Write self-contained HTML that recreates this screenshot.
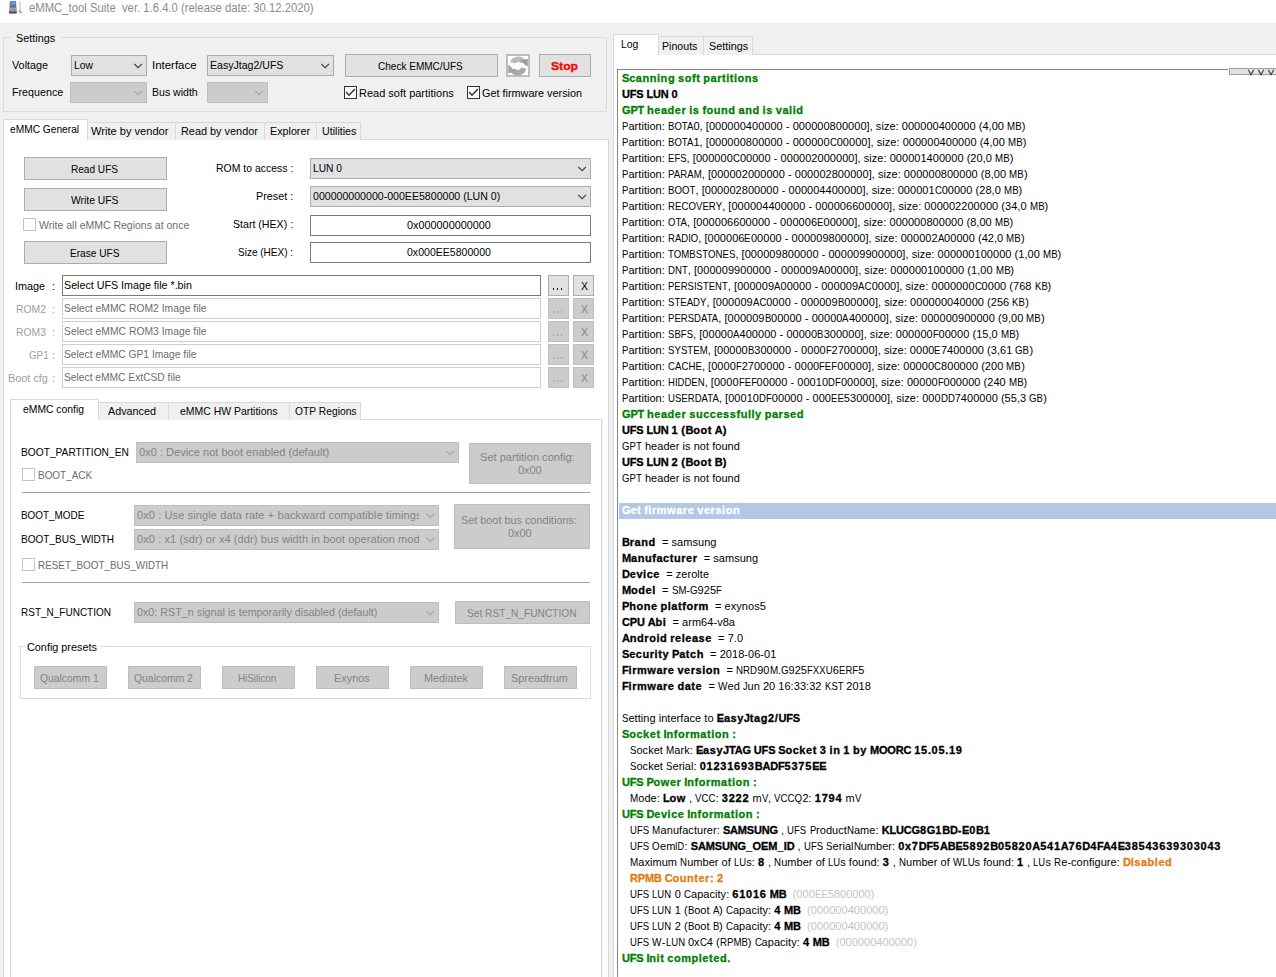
<!DOCTYPE html><html><head><meta charset="utf-8"><style>
html,body{margin:0;padding:0;width:1276px;height:977px;overflow:hidden;background:#f0f0f0;}
.a{position:absolute;box-sizing:border-box;}
.t{font-family:"Liberation Sans",sans-serif;white-space:pre;}
.lg{position:absolute;left:622px;font-family:"Liberation Sans",sans-serif;font-size:11px;line-height:16px;white-space:pre;color:#000;letter-spacing:0.04px;}
.lg i{font-style:normal;display:inline-block;transform-origin:0 0;}
.lg b{font-weight:700;letter-spacing:0.54px;-webkit-text-stroke:0.3px currentColor;}
.lg b i{letter-spacing:-0.16px;display:inline;transform:none;}
.lg b s{text-decoration:none;letter-spacing:0.76px;}
.lg b u{text-decoration:none;letter-spacing:-0.17px;}
.lg .g{color:#008000;}
.lg .o{color:#e07c12;}
.lg .gy{color:#c3c3c3;}
.lg .w{color:#fff;}
.ind{display:inline-block;width:8px;}
</style></head><body>
<div class="a" style="left:0px;top:0px;width:1276px;height:23px;background:#ffffff;"></div>
<svg class="a" style="left:8px;top:0px" width="16" height="16">
<defs><linearGradient id="ph" x1="0" y1="0" x2="0" y2="1"><stop offset="0" stop-color="#6a6a6a"/><stop offset="0.5" stop-color="#7e7e7e"/><stop offset="0.6" stop-color="#a4a4a4"/><stop offset="0.8" stop-color="#8a8a8a"/><stop offset="1" stop-color="#202020"/></linearGradient>
<linearGradient id="sc" x1="0" y1="0" x2="0" y2="1"><stop offset="0" stop-color="#6ab0ee"/><stop offset="1" stop-color="#2a72cc"/></linearGradient></defs>
<path d="M2.6 1 H7.4 Q7.9 1 8 1.6 L8.9 12.3 Q8.9 13.6 7.7 13.6 H2.1 Q0.9 13.6 0.9 12.3 L1.9 1.6 Q2 1 2.6 1 Z" fill="url(#ph)"/>
<path d="M2.9 1.7 H7.3 L7.6 7 H2.6 Z" fill="url(#sc)"/>
<path d="M10.2 2.2 Q12.8 2.5 12.4 4.5 L11.8 6 L12.2 10" stroke="#d4d4d4" stroke-width="1.7" fill="none"/>
<path d="M11 10.5 L13.5 13" stroke="#8c8c8c" stroke-width="1.6" fill="none"/>
</svg>
<div class="a t" style="left:29px;top:1px;font-size:12px;line-height:14px;color:#8c8c8c;transform:scaleX(0.9418);transform-origin:0 0;">eMMC_tool Suite  ver. 1.6.4.0 (release date: 30.12.2020)</div>
<div class="a" style="left:3px;top:37px;width:604px;height:75px;border:1px solid #dcdcdc;"></div>
<div class="a" style="left:11px;top:30px;width:50px;height:15px;background:#f0f0f0;"></div>
<div class="a t" style="left:16px;top:32px;font-size:11px;line-height:13px;color:#000;transform:scaleX(0.9887);transform-origin:0 0;">Settings</div>
<div class="a t" style="left:12px;top:59px;font-size:11px;line-height:13px;color:#000;transform:scaleX(0.9836);transform-origin:0 0;">Voltage</div>
<div class="a" style="left:71px;top:55px;width:76px;height:21px;background:#e1e1e1;border:1px solid #adadad;"></div>
<svg class="a" style="left:134px;top:63px" width="9" height="6"><path d="M0.2 0.9 L4.1 4.7 L8 0.9" fill="none" stroke="#404040" stroke-width="1.25"/></svg>
<div class="a t" style="left:74px;top:59px;font-size:11px;line-height:13px;color:#000;transform:scaleX(0.9412);transform-origin:0 0;">Low</div>
<div class="a t" style="left:152px;top:59px;font-size:11px;line-height:13px;color:#000;transform:scaleX(1.0418);transform-origin:0 0;">Interface</div>
<div class="a" style="left:207px;top:55px;width:127px;height:21px;background:#e1e1e1;border:1px solid #adadad;"></div>
<svg class="a" style="left:321px;top:63px" width="9" height="6"><path d="M0.2 0.9 L4.1 4.7 L8 0.9" fill="none" stroke="#404040" stroke-width="1.25"/></svg>
<div class="a t" style="left:210px;top:59px;font-size:11px;line-height:13px;color:#000;transform:scaleX(0.9605);transform-origin:0 0;">EasyJtag2/UFS</div>
<div class="a" style="left:345px;top:54px;width:153px;height:23px;background:#e1e1e1;border:1px solid #adadad;"></div>
<div class="a t" style="left:378px;top:60px;font-size:11px;line-height:13px;color:#000;transform:scaleX(0.9117);transform-origin:0 0;">Check EMMC/UFS</div>
<div class="a" style="left:506px;top:54px;width:24px;height:23px;background:#ffffff;border:2px solid #bdbdbd;"></div>
<svg class="a" style="left:508px;top:56px" width="20" height="20">
<path d="M4.3 7.9 A6 6 0 0 1 15.3 6.2" stroke="#bababa" stroke-width="5.4" fill="none"/>
<path d="M12.2 4.6 L19.8 2.8 L19.8 11.4 Z" fill="#9c9c9c"/>
<path d="M15.7 12.1 A6 6 0 0 1 4.7 13.8" stroke="#a9a9a9" stroke-width="5.4" fill="none"/>
<path d="M7.8 15.4 L0.2 17.2 L0.2 8.6 Z" fill="#a4a4a4"/>
<path d="M0 6.3 L20 10.6" stroke="#ffffff" stroke-width="1.2"/>
</svg>
<div class="a" style="left:539px;top:54px;width:52px;height:23px;background:#e1e1e1;border:1px solid #adadad;"></div>
<div class="a t" style="left:551px;top:60px;font-size:11px;line-height:13px;color:#ff0000;font-weight:700;transform:scaleX(1.1042);transform-origin:0 0;-webkit-text-stroke:0.3px #ff0000;">Stop</div>
<div class="a t" style="left:12px;top:86px;font-size:11px;line-height:13px;color:#000;transform:scaleX(0.9735);transform-origin:0 0;">Frequence</div>
<div class="a" style="left:70px;top:82px;width:77px;height:21px;background:#cccccc;border:1px solid #bfbfbf;"></div>
<svg class="a" style="left:134px;top:90px" width="9" height="6"><path d="M0.2 0.9 L4.1 4.7 L8 0.9" fill="none" stroke="#a6a6a6" stroke-width="1.25"/></svg>
<div class="a t" style="left:152px;top:86px;font-size:11px;line-height:13px;color:#000;transform:scaleX(0.958);transform-origin:0 0;">Bus width</div>
<div class="a" style="left:207px;top:82px;width:61px;height:21px;background:#cccccc;border:1px solid #bfbfbf;"></div>
<svg class="a" style="left:255px;top:90px" width="9" height="6"><path d="M0.2 0.9 L4.1 4.7 L8 0.9" fill="none" stroke="#a6a6a6" stroke-width="1.25"/></svg>
<div class="a" style="left:344px;top:86px;width:13px;height:13px;background:#fff;border:1px solid #333333;"></div>
<svg class="a" style="left:344px;top:86px" width="13" height="13"><path d="M2.1 6.1 L5 9.2 L10.9 3" fill="none" stroke="#333" stroke-width="1.45"/></svg>
<div class="a t" style="left:359px;top:87px;font-size:11px;line-height:13px;color:#000;">Read soft partitions</div>
<div class="a" style="left:467px;top:86px;width:13px;height:13px;background:#fff;border:1px solid #333333;"></div>
<svg class="a" style="left:467px;top:86px" width="13" height="13"><path d="M2.1 6.1 L5 9.2 L10.9 3" fill="none" stroke="#333" stroke-width="1.45"/></svg>
<div class="a t" style="left:482px;top:87px;font-size:11px;line-height:13px;color:#000;transform:scaleX(0.9864);transform-origin:0 0;">Get firmware version</div>
<div class="a" style="left:3px;top:139px;width:606px;height:852px;background:#ffffff;border:1px solid #d9d9d9;"></div>
<div class="a" style="left:87px;top:122px;width:89px;height:18px;background:#f0f0f0;border:1px solid #d9d9d9;border-bottom:none;"></div>
<div class="a t" style="left:91px;top:125px;font-size:11px;line-height:13px;color:#000;transform:scaleX(1.0074);transform-origin:0 0;">Write by vendor</div>
<div class="a" style="left:175px;top:122px;width:90px;height:18px;background:#f0f0f0;border:1px solid #d9d9d9;border-bottom:none;"></div>
<div class="a t" style="left:181px;top:125px;font-size:11px;line-height:13px;color:#000;transform:scaleX(0.9901);transform-origin:0 0;">Read by vendor</div>
<div class="a" style="left:264px;top:122px;width:53px;height:18px;background:#f0f0f0;border:1px solid #d9d9d9;border-bottom:none;"></div>
<div class="a t" style="left:270px;top:125px;font-size:11px;line-height:13px;color:#000;transform:scaleX(0.9764);transform-origin:0 0;">Explorer</div>
<div class="a" style="left:316px;top:122px;width:45px;height:18px;background:#f0f0f0;border:1px solid #d9d9d9;border-bottom:none;"></div>
<div class="a t" style="left:322px;top:125px;font-size:11px;line-height:13px;color:#000;transform:scaleX(0.9703);transform-origin:0 0;">Utilities</div>
<div class="a" style="left:3px;top:119px;width:85px;height:21px;background:#ffffff;border:1px solid #d9d9d9;border-bottom:none;"></div>
<div class="a t" style="left:10px;top:123px;font-size:11px;line-height:13px;color:#000;transform:scaleX(0.9265);transform-origin:0 0;">eMMC General</div>
<div class="a" style="left:24px;top:157px;width:143px;height:23px;background:#e1e1e1;border:1px solid #adadad;"></div>
<div class="a t" style="left:71px;top:163px;font-size:11px;line-height:13px;color:#000;transform:scaleX(0.9151);transform-origin:0 0;">Read UFS</div>
<div class="a" style="left:24px;top:188px;width:143px;height:23px;background:#e1e1e1;border:1px solid #adadad;"></div>
<div class="a t" style="left:71px;top:194px;font-size:11px;line-height:13px;color:#000;transform:scaleX(0.94);transform-origin:0 0;">Write UFS</div>
<div class="a" style="left:23px;top:218px;width:13px;height:13px;background:#fff;border:1px solid #c4c4c4;"></div>
<div class="a t" style="left:39px;top:219px;font-size:11px;line-height:13px;color:#6d6d6d;transform:scaleX(0.9541);transform-origin:0 0;">Write all eMMC Regions at once</div>
<div class="a" style="left:24px;top:241px;width:143px;height:23px;background:#e1e1e1;border:1px solid #adadad;"></div>
<div class="a t" style="left:70px;top:247px;font-size:11px;line-height:13px;color:#000;transform:scaleX(0.9201);transform-origin:0 0;">Erase UFS</div>
<div class="a t" style="left:216px;top:162px;font-size:11px;line-height:13px;color:#000;transform:scaleX(0.9496);transform-origin:0 0;">ROM to access :</div>
<div class="a" style="left:310px;top:158px;width:281px;height:21px;background:#e1e1e1;border:1px solid #adadad;"></div>
<svg class="a" style="left:578px;top:166px" width="9" height="6"><path d="M0.2 0.9 L4.1 4.7 L8 0.9" fill="none" stroke="#404040" stroke-width="1.25"/></svg>
<div class="a t" style="left:313px;top:162px;font-size:11px;line-height:13px;color:#000;transform:scaleX(0.9299);transform-origin:0 0;">LUN 0</div>
<div class="a t" style="left:256px;top:190px;font-size:11px;line-height:13px;color:#000;transform:scaleX(0.9814);transform-origin:0 0;">Preset :</div>
<div class="a" style="left:310px;top:186px;width:281px;height:21px;background:#e1e1e1;border:1px solid #adadad;"></div>
<svg class="a" style="left:578px;top:194px" width="9" height="6"><path d="M0.2 0.9 L4.1 4.7 L8 0.9" fill="none" stroke="#404040" stroke-width="1.25"/></svg>
<div class="a t" style="left:313px;top:190px;font-size:11px;line-height:13px;color:#000;transform:scaleX(0.9625);transform-origin:0 0;">000000000000-000EE5800000 (LUN 0)</div>
<div class="a t" style="left:233px;top:218px;font-size:11px;line-height:13px;color:#000;transform:scaleX(0.964);transform-origin:0 0;">Start (HEX) :</div>
<div class="a" style="left:310px;top:215px;width:281px;height:21px;background:#fff;border:1px solid #7a7a7a;"></div>
<div class="a t" style="left:407px;top:219px;font-size:11px;line-height:13px;color:#000;transform:scaleX(0.9867);transform-origin:0 0;">0x000000000000</div>
<div class="a t" style="left:238px;top:246px;font-size:11px;line-height:13px;color:#000;transform:scaleX(0.9105);transform-origin:0 0;">Size (HEX) :</div>
<div class="a" style="left:310px;top:242px;width:281px;height:21px;background:#fff;border:1px solid #7a7a7a;"></div>
<div class="a t" style="left:407px;top:246px;font-size:11px;line-height:13px;color:#000;transform:scaleX(0.9592);transform-origin:0 0;">0x000EE5800000</div>
<div class="a t" style="left:15px;top:280px;font-size:11px;line-height:13px;color:#000;transform:scaleX(0.9844);transform-origin:0 0;">Image</div>
<div class="a t" style="left:52px;top:280px;font-size:11px;line-height:13px;color:#000;">:</div>
<div class="a" style="left:62px;top:275px;width:479px;height:21px;background:#fff;border:1px solid #7a7a7a;"></div>
<div class="a t" style="left:64px;top:279px;font-size:11px;line-height:13px;color:#000;transform:scaleX(0.973);transform-origin:0 0;">Select UFS Image file *.bin</div>
<div class="a" style="left:548px;top:275px;width:21px;height:21px;background:#e1e1e1;border:1px solid #adadad;"></div>
<div class="a" style="left:553px;top:288px;width:1px;height:2px;background:#111;"></div>
<div class="a" style="left:557px;top:288px;width:1px;height:2px;background:#111;"></div>
<div class="a" style="left:561px;top:288px;width:1px;height:2px;background:#111;"></div>
<div class="a" style="left:573px;top:275px;width:21px;height:21px;background:#e1e1e1;border:1px solid #adadad;"></div>
<div class="a t" style="left:581px;top:280px;font-size:11px;line-height:13px;color:#000;transform:scaleX(0.9532);transform-origin:0 0;">X</div>
<div class="a t" style="left:16px;top:303px;font-size:11px;line-height:13px;color:#a0a0a0;transform:scaleX(0.9408);transform-origin:0 0;">ROM2</div>
<div class="a t" style="left:52px;top:303px;font-size:11px;line-height:13px;color:#a0a0a0;">:</div>
<div class="a" style="left:62px;top:298px;width:479px;height:21px;background:#fff;border:1px solid #cfcfcf;"></div>
<div class="a t" style="left:64px;top:302px;font-size:11px;line-height:13px;color:#6d6d6d;transform:scaleX(0.9399);transform-origin:0 0;">Select eMMC ROM2 Image file</div>
<div class="a" style="left:548px;top:298px;width:21px;height:21px;background:#cccccc;border:1px solid #bfbfbf;"></div>
<div class="a" style="left:553px;top:311px;width:1px;height:2px;background:#a0a0a0;"></div>
<div class="a" style="left:557px;top:311px;width:1px;height:2px;background:#a0a0a0;"></div>
<div class="a" style="left:561px;top:311px;width:1px;height:2px;background:#a0a0a0;"></div>
<div class="a" style="left:573px;top:298px;width:21px;height:21px;background:#cccccc;border:1px solid #bfbfbf;"></div>
<div class="a t" style="left:581px;top:303px;font-size:11px;line-height:13px;color:#838383;transform:scaleX(0.9532);transform-origin:0 0;">X</div>
<div class="a t" style="left:16px;top:326px;font-size:11px;line-height:13px;color:#a0a0a0;transform:scaleX(0.9408);transform-origin:0 0;">ROM3</div>
<div class="a t" style="left:52px;top:326px;font-size:11px;line-height:13px;color:#a0a0a0;">:</div>
<div class="a" style="left:62px;top:321px;width:479px;height:21px;background:#fff;border:1px solid #cfcfcf;"></div>
<div class="a t" style="left:64px;top:325px;font-size:11px;line-height:13px;color:#6d6d6d;transform:scaleX(0.9399);transform-origin:0 0;">Select eMMC ROM3 Image file</div>
<div class="a" style="left:548px;top:321px;width:21px;height:21px;background:#cccccc;border:1px solid #bfbfbf;"></div>
<div class="a" style="left:553px;top:334px;width:1px;height:2px;background:#a0a0a0;"></div>
<div class="a" style="left:557px;top:334px;width:1px;height:2px;background:#a0a0a0;"></div>
<div class="a" style="left:561px;top:334px;width:1px;height:2px;background:#a0a0a0;"></div>
<div class="a" style="left:573px;top:321px;width:21px;height:21px;background:#cccccc;border:1px solid #bfbfbf;"></div>
<div class="a t" style="left:581px;top:326px;font-size:11px;line-height:13px;color:#838383;transform:scaleX(0.9532);transform-origin:0 0;">X</div>
<div class="a t" style="left:29px;top:349px;font-size:11px;line-height:13px;color:#a0a0a0;transform:scaleX(0.8903);transform-origin:0 0;">GP1</div>
<div class="a t" style="left:52px;top:349px;font-size:11px;line-height:13px;color:#a0a0a0;">:</div>
<div class="a" style="left:62px;top:344px;width:479px;height:21px;background:#fff;border:1px solid #cfcfcf;"></div>
<div class="a t" style="left:64px;top:348px;font-size:11px;line-height:13px;color:#6d6d6d;transform:scaleX(0.9341);transform-origin:0 0;">Select eMMC GP1 Image file</div>
<div class="a" style="left:548px;top:344px;width:21px;height:21px;background:#cccccc;border:1px solid #bfbfbf;"></div>
<div class="a" style="left:553px;top:357px;width:1px;height:2px;background:#a0a0a0;"></div>
<div class="a" style="left:557px;top:357px;width:1px;height:2px;background:#a0a0a0;"></div>
<div class="a" style="left:561px;top:357px;width:1px;height:2px;background:#a0a0a0;"></div>
<div class="a" style="left:573px;top:344px;width:21px;height:21px;background:#cccccc;border:1px solid #bfbfbf;"></div>
<div class="a t" style="left:581px;top:349px;font-size:11px;line-height:13px;color:#838383;transform:scaleX(0.9532);transform-origin:0 0;">X</div>
<div class="a t" style="left:8px;top:372px;font-size:11px;line-height:13px;color:#a0a0a0;transform:scaleX(0.9886);transform-origin:0 0;">Boot cfg</div>
<div class="a t" style="left:52px;top:372px;font-size:11px;line-height:13px;color:#a0a0a0;">:</div>
<div class="a" style="left:62px;top:367px;width:479px;height:21px;background:#fff;border:1px solid #cfcfcf;"></div>
<div class="a t" style="left:64px;top:371px;font-size:11px;line-height:13px;color:#6d6d6d;transform:scaleX(0.9313);transform-origin:0 0;">Select eMMC ExtCSD file</div>
<div class="a" style="left:548px;top:367px;width:21px;height:21px;background:#cccccc;border:1px solid #bfbfbf;"></div>
<div class="a" style="left:553px;top:380px;width:1px;height:2px;background:#a0a0a0;"></div>
<div class="a" style="left:557px;top:380px;width:1px;height:2px;background:#a0a0a0;"></div>
<div class="a" style="left:561px;top:380px;width:1px;height:2px;background:#a0a0a0;"></div>
<div class="a" style="left:573px;top:367px;width:21px;height:21px;background:#cccccc;border:1px solid #bfbfbf;"></div>
<div class="a t" style="left:581px;top:372px;font-size:11px;line-height:13px;color:#838383;transform:scaleX(0.9532);transform-origin:0 0;">X</div>
<div class="a" style="left:10px;top:419px;width:592px;height:572px;background:#ffffff;border:1px solid #d9d9d9;"></div>
<div class="a" style="left:602px;top:419px;width:1px;height:572px;background:#f0f0f0;"></div>
<div class="a" style="left:98px;top:402px;width:71px;height:18px;background:#f0f0f0;border:1px solid #d9d9d9;border-bottom:none;"></div>
<div class="a t" style="left:108px;top:405px;font-size:11px;line-height:13px;color:#000;transform:scaleX(0.9808);transform-origin:0 0;">Advanced</div>
<div class="a" style="left:168px;top:402px;width:122px;height:18px;background:#f0f0f0;border:1px solid #d9d9d9;border-bottom:none;"></div>
<div class="a t" style="left:180px;top:405px;font-size:11px;line-height:13px;color:#000;transform:scaleX(0.9495);transform-origin:0 0;">eMMC HW Partitions</div>
<div class="a" style="left:289px;top:402px;width:72px;height:18px;background:#f0f0f0;border:1px solid #d9d9d9;border-bottom:none;"></div>
<div class="a t" style="left:295px;top:405px;font-size:11px;line-height:13px;color:#000;transform:scaleX(0.9343);transform-origin:0 0;">OTP Regions</div>
<div class="a" style="left:10px;top:399px;width:89px;height:21px;background:#ffffff;border:1px solid #d9d9d9;border-bottom:none;"></div>
<div class="a t" style="left:23px;top:403px;font-size:11px;line-height:13px;color:#000;transform:scaleX(0.9414);transform-origin:0 0;">eMMC config</div>
<div class="a t" style="left:21px;top:446px;font-size:11px;line-height:13px;color:#000;transform:scaleX(0.9266);transform-origin:0 0;">BOOT_PARTITION_EN</div>
<div class="a" style="left:136px;top:442px;width:323px;height:21px;background:#cccccc;border:1px solid #bfbfbf;"></div>
<svg class="a" style="left:446px;top:450px" width="9" height="6"><path d="M0.2 0.9 L4.1 4.7 L8 0.9" fill="none" stroke="#a6a6a6" stroke-width="1.25"/></svg>
<div class="a t" style="left:139px;top:446px;font-size:11px;line-height:13px;color:#838383;transform:scaleX(1.0065);transform-origin:0 0;">0x0 : Device not boot enabled (default)</div>
<div class="a" style="left:469px;top:443px;width:122px;height:41px;background:#cccccc;border:1px solid #bfbfbf;"></div>
<div class="a t" style="left:480px;top:451px;font-size:11px;line-height:13px;color:#838383;transform:scaleX(1.0056);transform-origin:0 0;">Set partition config:</div>
<div class="a t" style="left:518px;top:464px;font-size:11px;line-height:13px;color:#838383;transform:scaleX(0.9891);transform-origin:0 0;">0x00</div>
<div class="a" style="left:22px;top:468px;width:13px;height:13px;background:#fff;border:1px solid #c4c4c4;"></div>
<div class="a t" style="left:38px;top:469px;font-size:11px;line-height:13px;color:#6d6d6d;transform:scaleX(0.9031);transform-origin:0 0;">BOOT_ACK</div>
<div class="a" style="left:22px;top:492px;width:568px;height:1px;background:#a0a0a0;"></div>
<div class="a t" style="left:21px;top:509px;font-size:11px;line-height:13px;color:#000;transform:scaleX(0.9005);transform-origin:0 0;">BOOT_MODE</div>
<div class="a" style="left:134px;top:505px;width:305px;height:21px;background:#cccccc;border:1px solid #bfbfbf;"></div>
<svg class="a" style="left:426px;top:513px" width="9" height="6"><path d="M0.2 0.9 L4.1 4.7 L8 0.9" fill="none" stroke="#a6a6a6" stroke-width="1.25"/></svg>
<div class="a" style="left:137px;top:505px;width:282px;height:20px;overflow:hidden">
<div class="a t" style="left:0px;top:4px;font-size:11px;line-height:13px;color:#838383;letter-spacing:0.11px;">0x0 : Use single data rate + backward compatible timings in boot operation (default)</div>
</div>
<div class="a t" style="left:21px;top:533px;font-size:11px;line-height:13px;color:#000;transform:scaleX(0.912);transform-origin:0 0;">BOOT_BUS_WIDTH</div>
<div class="a" style="left:134px;top:529px;width:305px;height:21px;background:#cccccc;border:1px solid #bfbfbf;"></div>
<svg class="a" style="left:426px;top:537px" width="9" height="6"><path d="M0.2 0.9 L4.1 4.7 L8 0.9" fill="none" stroke="#a6a6a6" stroke-width="1.25"/></svg>
<div class="a" style="left:137px;top:529px;width:282px;height:20px;overflow:hidden">
<div class="a t" style="left:0px;top:4px;font-size:11px;line-height:13px;color:#838383;letter-spacing:0.1px;">0x0 : x1 (sdr) or x4 (ddr) bus width in boot operation mode (default)</div>
</div>
<div class="a" style="left:454px;top:504px;width:136px;height:45px;background:#cccccc;border:1px solid #bfbfbf;"></div>
<div class="a t" style="left:461px;top:514px;font-size:11px;line-height:13px;color:#838383;transform:scaleX(0.9862);transform-origin:0 0;">Set boot bus conditions:</div>
<div class="a t" style="left:508px;top:527px;font-size:11px;line-height:13px;color:#838383;transform:scaleX(0.9891);transform-origin:0 0;">0x00</div>
<div class="a" style="left:22px;top:558px;width:13px;height:13px;background:#fff;border:1px solid #c4c4c4;"></div>
<div class="a t" style="left:38px;top:559px;font-size:11px;line-height:13px;color:#6d6d6d;transform:scaleX(0.8988);transform-origin:0 0;">RESET_BOOT_BUS_WIDTH</div>
<div class="a" style="left:22px;top:582px;width:568px;height:1px;background:#a0a0a0;"></div>
<div class="a t" style="left:21px;top:606px;font-size:11px;line-height:13px;color:#000;transform:scaleX(0.9089);transform-origin:0 0;">RST_N_FUNCTION</div>
<div class="a" style="left:134px;top:602px;width:305px;height:21px;background:#cccccc;border:1px solid #bfbfbf;"></div>
<svg class="a" style="left:426px;top:610px" width="9" height="6"><path d="M0.2 0.9 L4.1 4.7 L8 0.9" fill="none" stroke="#a6a6a6" stroke-width="1.25"/></svg>
<div class="a t" style="left:137px;top:606px;font-size:11px;line-height:13px;color:#838383;transform:scaleX(0.9781);transform-origin:0 0;">0x0: RST_n signal is temporarily disabled (default)</div>
<div class="a" style="left:455px;top:601px;width:135px;height:23px;background:#cccccc;border:1px solid #bfbfbf;"></div>
<div class="a t" style="left:467px;top:607px;font-size:11px;line-height:13px;color:#838383;transform:scaleX(0.9234);transform-origin:0 0;">Set RST_N_FUNCTION</div>
<div class="a" style="left:20px;top:646px;width:571px;height:53px;border:1px solid #dcdcdc;"></div>
<div class="a" style="left:25px;top:640px;width:75px;height:13px;background:#fff;"></div>
<div class="a t" style="left:27px;top:641px;font-size:11px;line-height:13px;color:#000;transform:scaleX(0.9854);transform-origin:0 0;">Config presets</div>
<div class="a" style="left:34px;top:666px;width:73px;height:23px;background:#cccccc;border:1px solid #bfbfbf;"></div>
<div class="a t" style="left:40px;top:672px;font-size:11px;line-height:13px;color:#838383;transform:scaleX(0.9413);transform-origin:0 0;">Qualcomm 1</div>
<div class="a" style="left:128px;top:666px;width:73px;height:23px;background:#cccccc;border:1px solid #bfbfbf;"></div>
<div class="a t" style="left:134px;top:672px;font-size:11px;line-height:13px;color:#838383;transform:scaleX(0.9445);transform-origin:0 0;">Qualcomm 2</div>
<div class="a" style="left:222px;top:666px;width:73px;height:23px;background:#cccccc;border:1px solid #bfbfbf;"></div>
<div class="a t" style="left:238px;top:672px;font-size:11px;line-height:13px;color:#838383;transform:scaleX(0.8949);transform-origin:0 0;">HiSilicon</div>
<div class="a" style="left:316px;top:666px;width:73px;height:23px;background:#cccccc;border:1px solid #bfbfbf;"></div>
<div class="a t" style="left:334px;top:672px;font-size:11px;line-height:13px;color:#838383;transform:scaleX(0.9895);transform-origin:0 0;">Exynos</div>
<div class="a" style="left:410px;top:666px;width:73px;height:23px;background:#cccccc;border:1px solid #bfbfbf;"></div>
<div class="a t" style="left:424px;top:672px;font-size:11px;line-height:13px;color:#838383;transform:scaleX(0.9856);transform-origin:0 0;">Mediatek</div>
<div class="a" style="left:504px;top:666px;width:73px;height:23px;background:#cccccc;border:1px solid #bfbfbf;"></div>
<div class="a t" style="left:511px;top:672px;font-size:11px;line-height:13px;color:#838383;transform:scaleX(0.9881);transform-origin:0 0;">Spreadtrum</div>
<div class="a" style="left:613px;top:54px;width:678px;height:937px;background:#ffffff;border:1px solid #d9d9d9;"></div>
<div class="a" style="left:658px;top:36px;width:46px;height:19px;background:#f0f0f0;border:1px solid #d9d9d9;border-bottom:none;"></div>
<div class="a t" style="left:662px;top:40px;font-size:11px;line-height:13px;color:#000;transform:scaleX(0.9645);transform-origin:0 0;">Pinouts</div>
<div class="a" style="left:703px;top:36px;width:50px;height:19px;background:#f0f0f0;border:1px solid #d9d9d9;border-bottom:none;"></div>
<div class="a t" style="left:709px;top:40px;font-size:11px;line-height:13px;color:#000;transform:scaleX(0.9836);transform-origin:0 0;">Settings</div>
<div class="a" style="left:613px;top:34px;width:46px;height:21px;background:#ffffff;border:1px solid #d9d9d9;border-bottom:none;"></div>
<div class="a t" style="left:621px;top:38px;font-size:11px;line-height:13px;color:#000;transform:scaleX(0.9423);transform-origin:0 0;">Log</div>
<div class="a" style="left:617px;top:69px;width:674px;height:922px;background:#fff;border:1px solid #828790;"></div>
<div class="a" style="left:1229px;top:68px;width:62px;height:7px;background:#e1e1e1;border:1px solid #a0a0a0;"></div>
<div class="a" style="left:1228px;top:69px;width:1px;height:1px;background:#ffffff;"></div>
<svg class="a" style="left:1240px;top:68px" width="36" height="8"><path d="M8.3 1.8 L11 6.8 L13.7 1.8 M18.3 1.8 L21 6.8 L23.7 1.8 M28.3 1.8 L31 6.8 L33.7 1.8" fill="none" stroke="#3a3a4a" stroke-width="1.05"/></svg>
<div class="a" style="left:619px;top:503px;width:672px;height:16px;background:#b4c8e6;"></div>
<div class="lg" style="top:70px"><b class="g"><i>S</i>canning<u> </u>soft<u> </u>partitions</b>
<b><i>UFS</i><u> </u><i>LUN</i><u> </u><s>0</s></b>
<b class="g"><i>GPT</i><u> </u>header<u> </u>is<u> </u>found<u> </u>and<u> </u>is<u> </u>valid</b>
<i style="transform:scaleX(0.8693);margin-right:-0.96px">P</i>artition: <i style="transform:scaleX(0.8682);margin-right:-3.84px">BOTA</i>0, [000000400000 - 000000800000], size: 000000400000 (4,00 <i style="transform:scaleX(0.8836);margin-right:-1.92px">MB</i>)
<i style="transform:scaleX(0.8693);margin-right:-0.96px">P</i>artition: <i style="transform:scaleX(0.8682);margin-right:-3.84px">BOTA</i>1, [000000800000 - 000000<i style="transform:scaleX(0.8793);margin-right:-0.96px">C</i>00000], size: 000000400000 (4,00 <i style="transform:scaleX(0.8836);margin-right:-1.92px">MB</i>)
<i style="transform:scaleX(0.8693);margin-right:-0.96px">P</i>artition: <i style="transform:scaleX(0.8655);margin-right:-2.88px">EFS</i>, [000000<i style="transform:scaleX(0.8793);margin-right:-0.96px">C</i>00000 - 000002000000], size: 000001400000 (20,0 <i style="transform:scaleX(0.8836);margin-right:-1.92px">MB</i>)
<i style="transform:scaleX(0.8693);margin-right:-0.96px">P</i>artition: <i style="transform:scaleX(0.8747);margin-right:-4.8px">PARAM</i>, [000002000000 - 000002800000], size: 000000800000 (8,00 <i style="transform:scaleX(0.8836);margin-right:-1.92px">MB</i>)
<i style="transform:scaleX(0.8693);margin-right:-0.96px">P</i>artition: <i style="transform:scaleX(0.8768);margin-right:-3.84px">BOOT</i>, [000002800000 - 000004400000], size: 000001<i style="transform:scaleX(0.8793);margin-right:-0.96px">C</i>00000 (28,0 <i style="transform:scaleX(0.8836);margin-right:-1.92px">MB</i>)
<i style="transform:scaleX(0.8693);margin-right:-0.96px">P</i>artition: <i style="transform:scaleX(0.8752);margin-right:-7.68px">RECOVERY</i>, [000004400000 - 000006600000], size: 000002200000 (34,0 <i style="transform:scaleX(0.8836);margin-right:-1.92px">MB</i>)
<i style="transform:scaleX(0.8693);margin-right:-0.96px">P</i>artition: <i style="transform:scaleX(0.8679);margin-right:-2.88px">OTA</i>, [000006600000 - 000006<i style="transform:scaleX(0.8693);margin-right:-0.96px">E</i>00000], size: 000000800000 (8,00 <i style="transform:scaleX(0.8836);margin-right:-1.92px">MB</i>)
<i style="transform:scaleX(0.8693);margin-right:-0.96px">P</i>artition: <i style="transform:scaleX(0.8622);margin-right:-4.8px">RADIO</i>, [000006<i style="transform:scaleX(0.8693);margin-right:-0.96px">E</i>00000 - 000009800000], size: 000002<i style="transform:scaleX(0.8693);margin-right:-0.96px">A</i>00000 (42,0 <i style="transform:scaleX(0.8836);margin-right:-1.92px">MB</i>)
<i style="transform:scaleX(0.8693);margin-right:-0.96px">P</i>artition: <i style="transform:scaleX(0.8747);margin-right:-9.6px">TOMBSTONES</i>, [000009800000 - 000009900000], size: 000000100000 (1,00 <i style="transform:scaleX(0.8836);margin-right:-1.92px">MB</i>)
<i style="transform:scaleX(0.8693);margin-right:-0.96px">P</i>artition: <i style="transform:scaleX(0.8726);margin-right:-2.88px">DNT</i>, [000009900000 - 000009<i style="transform:scaleX(0.8693);margin-right:-0.96px">A</i>00000], size: 000000100000 (1,00 <i style="transform:scaleX(0.8836);margin-right:-1.92px">MB</i>)
<i style="transform:scaleX(0.8693);margin-right:-0.96px">P</i>artition: <i style="transform:scaleX(0.861);margin-right:-9.6px">PERSISTENT</i>, [000009<i style="transform:scaleX(0.8693);margin-right:-0.96px">A</i>00000 - 000009<i style="transform:scaleX(0.8744);margin-right:-1.92px">AC</i>0000], size: 0000000<i style="transform:scaleX(0.8793);margin-right:-0.96px">C</i>0000 (768 <i style="transform:scaleX(0.8693);margin-right:-1.92px">KB</i>)
<i style="transform:scaleX(0.8693);margin-right:-0.96px">P</i>artition: <i style="transform:scaleX(0.8691);margin-right:-5.76px">STEADY</i>, [000009<i style="transform:scaleX(0.8744);margin-right:-1.92px">AC</i>0000 - 000009<i style="transform:scaleX(0.8693);margin-right:-0.96px">B</i>00000], size: 000000040000 (256 <i style="transform:scaleX(0.8693);margin-right:-1.92px">KB</i>)
<i style="transform:scaleX(0.8693);margin-right:-0.96px">P</i>artition: <i style="transform:scaleX(0.8668);margin-right:-7.68px">PERSDATA</i>, [000009<i style="transform:scaleX(0.8693);margin-right:-0.96px">B</i>00000 - 00000<i style="transform:scaleX(0.8693);margin-right:-0.96px">A</i>400000], size: 000000900000 (9,00 <i style="transform:scaleX(0.8836);margin-right:-1.92px">MB</i>)
<i style="transform:scaleX(0.8693);margin-right:-0.96px">P</i>artition: <i style="transform:scaleX(0.8664);margin-right:-3.84px">SBFS</i>, [00000<i style="transform:scaleX(0.8693);margin-right:-0.96px">A</i>400000 - 00000<i style="transform:scaleX(0.8693);margin-right:-0.96px">B</i>300000], size: 000000<i style="transform:scaleX(0.8574);margin-right:-0.96px">F</i>00000 (15,0 <i style="transform:scaleX(0.8836);margin-right:-1.92px">MB</i>)
<i style="transform:scaleX(0.8693);margin-right:-0.96px">P</i>artition: <i style="transform:scaleX(0.8727);margin-right:-5.76px">SYSTEM</i>, [00000<i style="transform:scaleX(0.8693);margin-right:-0.96px">B</i>300000 - 0000<i style="transform:scaleX(0.8574);margin-right:-0.96px">F</i>2700000], size: 0000<i style="transform:scaleX(0.8693);margin-right:-0.96px">E</i>7400000 (3,61 <i style="transform:scaleX(0.8793);margin-right:-1.92px">GB</i>)
<i style="transform:scaleX(0.8693);margin-right:-0.96px">P</i>artition: <i style="transform:scaleX(0.8754);margin-right:-4.8px">CACHE</i>, [0000<i style="transform:scaleX(0.8574);margin-right:-0.96px">F</i>2700000 - 0000<i style="transform:scaleX(0.8614);margin-right:-2.88px">FEF</i>00000], size: 00000<i style="transform:scaleX(0.8793);margin-right:-0.96px">C</i>800000 (200 <i style="transform:scaleX(0.8836);margin-right:-1.92px">MB</i>)
<i style="transform:scaleX(0.8693);margin-right:-0.96px">P</i>artition: <i style="transform:scaleX(0.8634);margin-right:-5.76px">HIDDEN</i>, [0000<i style="transform:scaleX(0.8614);margin-right:-2.88px">FEF</i>00000 - 00010<i style="transform:scaleX(0.8691);margin-right:-1.92px">DF</i>00000], size: 00000<i style="transform:scaleX(0.8574);margin-right:-0.96px">F</i>000000 (240 <i style="transform:scaleX(0.8836);margin-right:-1.92px">MB</i>)
<i style="transform:scaleX(0.8693);margin-right:-0.96px">P</i>artition: <i style="transform:scaleX(0.8682);margin-right:-7.68px">USERDATA</i>, [00010<i style="transform:scaleX(0.8691);margin-right:-1.92px">DF</i>00000 - 000<i style="transform:scaleX(0.8693);margin-right:-1.92px">EE</i>5300000], size: 000<i style="transform:scaleX(0.8792);margin-right:-1.92px">DD</i>7400000 (55,3 <i style="transform:scaleX(0.8793);margin-right:-1.92px">GB</i>)
<b class="g"><i>GPT</i><u> </u>header<u> </u>successfully<u> </u>parsed</b>
<b><i>UFS</i><u> </u><i>LUN</i><u> </u><s>1</s><u> </u>(<i>B</i>oot<u> </u><i>A</i>)</b>
<i style="transform:scaleX(0.8727);margin-right:-2.88px">GPT</i> header is not found
<b><i>UFS</i><u> </u><i>LUN</i><u> </u><s>2</s><u> </u>(<i>B</i>oot<u> </u><i>B</i>)</b>
<i style="transform:scaleX(0.8727);margin-right:-2.88px">GPT</i> header is not found
 
<b class="w"><i>G</i>et<u> </u>firmware<u> </u>version</b>
 
<b><i>B</i>rand</b>  = samsung
<b><i>M</i>anufacturer</b>  = samsung
<b><i>D</i>evice</b>  = zerolte
<b><i>M</i>odel</b>  = <i style="transform:scaleX(0.8836);margin-right:-1.92px">SM</i>-<i style="transform:scaleX(0.8879);margin-right:-0.96px">G</i>925<i style="transform:scaleX(0.8574);margin-right:-0.96px">F</i>
<b><i>P</i>hone<u> </u>platform</b>  = exynos5
<b><i>CPU</i><u> </u><i>A</i>bi</b>  = arm64-v8a
<b><i>A</i>ndroid<u> </u>release</b>  = 7.0
<b><i>S</i>ecurity<u> </u><i>P</i>atch</b>  = 2018-06-01
<b><i>F</i>irmware<u> </u>version</b>  = <i style="transform:scaleX(0.8792);margin-right:-2.88px">NRD</i>90<i style="transform:scaleX(0.8953);margin-right:-0.96px">M</i>.<i style="transform:scaleX(0.8879);margin-right:-0.96px">G</i>925<i style="transform:scaleX(0.8691);margin-right:-3.84px">FXXU</i>6<i style="transform:scaleX(0.8691);margin-right:-2.88px">ERF</i>5
<b><i>F</i>irmware<u> </u>date</b>  = <i style="transform:scaleX(0.9076);margin-right:-0.96px">W</i>ed <i style="transform:scaleX(0.8255);margin-right:-0.96px">J</i>un 20 16:33:32 <i style="transform:scaleX(0.8655);margin-right:-2.88px">KST</i> 2018
 
<i style="transform:scaleX(0.8693);margin-right:-0.96px">S</i>etting interface to <b><i>E</i>asy<i>J</i>tag<s>2</s>/<i>UFS</i></b>
<b class="g"><i>S</i>ocket<u> </u><i>I</i>nformation<u> </u>:</b>
<span class="ind"></span><i style="transform:scaleX(0.8693);margin-right:-0.96px">S</i>ocket <i style="transform:scaleX(0.8953);margin-right:-0.96px">M</i>ark: <b><i>E</i>asy<i>JTAG</i><u> </u><i>UFS</i><u> </u><i>S</i>ocket<u> </u><s>3</s><u> </u>in<u> </u><s>1</s><u> </u>by<u> </u><i>MOORC</i><u> </u><s>15</s>.<s>05</s>.<s>19</s></b>
<span class="ind"></span><i style="transform:scaleX(0.8693);margin-right:-0.96px">S</i>ocket <i style="transform:scaleX(0.8693);margin-right:-0.96px">S</i>erial: <b><s>01231693</s><i>BADF</i><s>5375</s><i>EE</i></b>
<b class="g"><i>UFS</i><u> </u><i>P</i>ower<u> </u><i>I</i>nformation<u> </u>:</b>
<span class="ind"></span><i style="transform:scaleX(0.8953);margin-right:-0.96px">M</i>ode: <b><i>L</i>ow</b> , <i style="transform:scaleX(0.876);margin-right:-2.88px">VCC</i>: <b><s>3222</s></b> m<i style="transform:scaleX(0.8693);margin-right:-0.96px">V</i>, <i style="transform:scaleX(0.8792);margin-right:-3.84px">VCCQ</i>2: <b><s>1794</s></b> m<i style="transform:scaleX(0.8693);margin-right:-0.96px">V</i>
<b class="g"><i>UFS</i><u> </u><i>D</i>evice<u> </u><i>I</i>nformation<u> </u>:</b>
<span class="ind"></span><i style="transform:scaleX(0.8691);margin-right:-2.88px">UFS</i> <i style="transform:scaleX(0.8953);margin-right:-0.96px">M</i>anufacturer: <b><i>SAMSUNG</i></b> , <i style="transform:scaleX(0.8691);margin-right:-2.88px">UFS</i> <i style="transform:scaleX(0.8693);margin-right:-0.96px">P</i>roduct<i style="transform:scaleX(0.8793);margin-right:-0.96px">N</i>ame: <b><i>KLUCG</i><s>8</s><i>G</i><s>1</s><i>BD</i>-<i>E</i><s>0</s><i>B</i><s>1</s></b>
<span class="ind"></span><i style="transform:scaleX(0.8691);margin-right:-2.88px">UFS</i> <i style="transform:scaleX(0.8879);margin-right:-0.96px">O</i>em<i style="transform:scaleX(0.8255);margin-right:-1.92px">ID</i>: <b><i>SAMSUNG</i>_<i>OEM</i>_<i>ID</i></b> , <i style="transform:scaleX(0.8691);margin-right:-2.88px">UFS</i> <i style="transform:scaleX(0.8693);margin-right:-0.96px">S</i>erial<i style="transform:scaleX(0.8793);margin-right:-0.96px">N</i>umber: <b><s>0</s>x<s>7</s><i>DF</i><s>5</s><i>ABE</i><s>5892</s><i>B</i><s>05820</s><i>A</i><s>541</s><i>A</i><s>76</s><i>D</i><s>4</s><i>FA</i><s>4</s><i>E</i><s>38543639303043</s></b>
<span class="ind"></span><i style="transform:scaleX(0.8953);margin-right:-0.96px">M</i>aximum <i style="transform:scaleX(0.8793);margin-right:-0.96px">N</i>umber of <i style="transform:scaleX(0.8635);margin-right:-1.92px">LU</i>s: <b><s>8</s></b> , <i style="transform:scaleX(0.8793);margin-right:-0.96px">N</i>umber of <i style="transform:scaleX(0.8635);margin-right:-1.92px">LU</i>s found: <b><s>3</s></b> , <i style="transform:scaleX(0.8793);margin-right:-0.96px">N</i>umber of <i style="transform:scaleX(0.8822);margin-right:-2.88px">WLU</i>s found: <b><s>1</s></b> , <i style="transform:scaleX(0.8635);margin-right:-1.92px">LU</i>s <i style="transform:scaleX(0.8793);margin-right:-0.96px">R</i>e-configure: <b class="o"><i>D</i>isabled</b>
<span class="ind"></span><b class="o"><i>RPMB</i><u> </u><i>C</i>ounter:<u> </u><s>2</s></b>
<span class="ind"></span><i style="transform:scaleX(0.8691);margin-right:-2.88px">UFS</i> <i style="transform:scaleX(0.8692);margin-right:-2.88px">LUN</i> 0 <i style="transform:scaleX(0.8793);margin-right:-0.96px">C</i>apacity: <b><s>61016</s><u> </u><i>MB</i></b><span class="gy">  (000<i style="transform:scaleX(0.8693);margin-right:-1.92px">EE</i>5800000)</span>
<span class="ind"></span><i style="transform:scaleX(0.8691);margin-right:-2.88px">UFS</i> <i style="transform:scaleX(0.8692);margin-right:-2.88px">LUN</i> 1 (<i style="transform:scaleX(0.8693);margin-right:-0.96px">B</i>oot <i style="transform:scaleX(0.8693);margin-right:-0.96px">A</i>) <i style="transform:scaleX(0.8793);margin-right:-0.96px">C</i>apacity: <b><s>4</s><u> </u><i>MB</i></b><span class="gy">  (000000400000)</span>
<span class="ind"></span><i style="transform:scaleX(0.8691);margin-right:-2.88px">UFS</i> <i style="transform:scaleX(0.8692);margin-right:-2.88px">LUN</i> 2 (<i style="transform:scaleX(0.8693);margin-right:-0.96px">B</i>oot <i style="transform:scaleX(0.8693);margin-right:-0.96px">B</i>) <i style="transform:scaleX(0.8793);margin-right:-0.96px">C</i>apacity: <b><s>4</s><u> </u><i>MB</i></b><span class="gy">  (000000400000)</span>
<span class="ind"></span><i style="transform:scaleX(0.8691);margin-right:-2.88px">UFS</i> <i style="transform:scaleX(0.9076);margin-right:-0.96px">W</i>-<i style="transform:scaleX(0.8692);margin-right:-2.88px">LUN</i> 0x<i style="transform:scaleX(0.8793);margin-right:-0.96px">C</i>4 (<i style="transform:scaleX(0.8792);margin-right:-3.84px">RPMB</i>) <i style="transform:scaleX(0.8793);margin-right:-0.96px">C</i>apacity: <b><s>4</s><u> </u><i>MB</i></b><span class="gy">  (000000400000)</span>
<b class="g"><i>UFS</i><u> </u><i>I</i>nit<u> </u>completed.</b></div>
</body></html>
